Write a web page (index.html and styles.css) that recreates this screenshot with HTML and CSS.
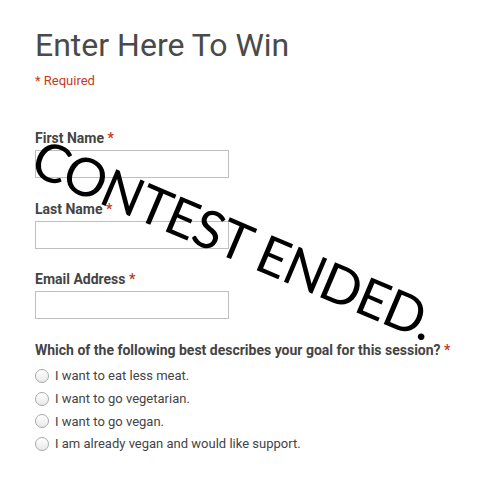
FILE: index.html
```html
<!DOCTYPE html>
<html>
<head>
<meta charset="utf-8">
<link rel="stylesheet" href="styles.css">
</head>
<body>
<div class="page">
  <h1 class="title">Enter Here To Win</h1>
  <div class="required-note">* Required</div>
  <form class="form">
    <div class="field">
      <label class="label" for="fn">First Name <span class="star">*</span></label>
      <input class="text-input" id="fn" type="text">
    </div>
    <div class="field">
      <label class="label" for="ln">Last Name <span class="star">*</span></label>
      <input class="text-input" id="ln" type="text">
    </div>
    <div class="field">
      <label class="label" for="em">Email Address <span class="star">*</span></label>
      <input class="text-input" id="em" type="text">
    </div>
    <div class="question">
      <div class="label">Which of the following best describes your goal for this session? <span class="star">*</span></div>
      <label class="option"><input class="radio" type="radio" name="goal"><span>I want to eat less meat.</span></label>
      <label class="option"><input class="radio" type="radio" name="goal"><span>I want to go vegetarian.</span></label>
      <label class="option"><input class="radio" type="radio" name="goal"><span>I want to go vegan.</span></label>
      <label class="option"><input class="radio" type="radio" name="goal"><span>I am already vegan and would like support.</span></label>
    </div>
  </form>
  <div class="stamp">CONTEST ENDED.</div>
</div>
</body>
</html>
```
FILE: styles.css
```css
html, body {
  margin: 0;
  padding: 0;
  background: #fff;
}
.page {
  position: relative;
  padding: 27px 0 0 35px;
  font-family: Roboto, "Liberation Sans", sans-serif;
  color: #444;
}
.title {
  margin: 0;
  font-size: 32px;
  line-height: 36px;
  font-weight: 400;
  color: #4a4a4a;
}
.required-note {
  margin-top: 8px;
  font-size: 13px;
  line-height: 20px;
  color: #c43b1d;
}
.form {
  margin: 37px 0 0 0;
}
.field {
  display: flex;
  flex-direction: column;
  align-items: flex-start;
  gap: 2px;
  margin-bottom: 20.5px;
}
.label {
  font-size: 14px;
  line-height: 20px;
  font-weight: 700;
  color: #444;
}
.star {
  color: #c43b1d;
}
.text-input {
  box-sizing: border-box;
  width: 194px;
  height: 28px;
  margin: 0;
  border: 1px solid #bfbfbf;
  border-radius: 0;
  background: #fff;
  outline: none;
}
.question {
  margin-top: 2px;
}
.question .label {
  margin-bottom: 5px;
}
.option {
  display: flex;
  align-items: center;
  gap: 6px;
  height: 22.7px;
  font-size: 13px;
  color: #444;
}
.radio {
  appearance: none;
  -webkit-appearance: none;
  box-sizing: border-box;
  width: 14px;
  height: 14px;
  margin: 0;
  border: 1px solid #a8a8a8;
  border-radius: 50%;
  background: linear-gradient(#ffffff, #e9e9e9);
  box-shadow: inset 0 1px 1px rgba(255,255,255,0.8);
}
.stamp {
  position: absolute;
  left: 28.2px;
  top: 125.85px;
  font-family: Lato, "Liberation Sans", sans-serif;
  font-size: 53px;
  line-height: 53px;
  letter-spacing: -1px;
  color: #000;
  white-space: nowrap;
  transform-origin: 0 47px;
  transform: rotate(23deg);
  pointer-events: none;
}
```
